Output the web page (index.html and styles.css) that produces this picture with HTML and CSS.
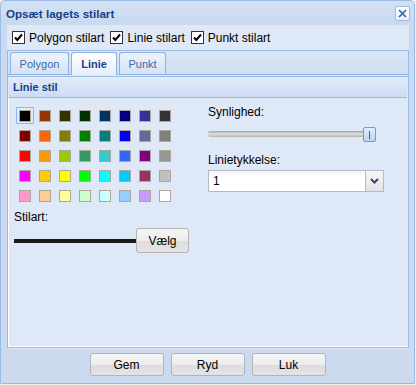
FILE: index.html
```html
<!DOCTYPE html>
<html lang="da">
<head>
    <meta charset="UTF-8">
    <meta name="viewport" content="width=device-width, initial-scale=1.0">
    <title>Opsæt lagets stilart</title>
    <link rel="stylesheet" href="styles.css">
</head>
<body>
<div class="window">
    <div class="win-header">
        <span class="win-title">Opsæt lagets stilart</span>
        <span class="win-close">
            <svg width="13" height="13" viewBox="0 0 13 13"><path d="M3 3 L10 10 M10 3 L3 10" stroke="#3b5f96" stroke-width="1.6" fill="none"/></svg>
        </span>
    </div>

    <div class="win-body">
        <div class="check-row">
            <label class="check"><span class="cb"><svg width="11" height="11" viewBox="0 0 11 11"><path d="M2 5.5 L4.3 8 L9 2.5" stroke="#000" stroke-width="2" fill="none"/></svg></span>Polygon stilart</label>
            <label class="check"><span class="cb"><svg width="11" height="11" viewBox="0 0 11 11"><path d="M2 5.5 L4.3 8 L9 2.5" stroke="#000" stroke-width="2" fill="none"/></svg></span>Linie stilart</label>
            <label class="check"><span class="cb"><svg width="11" height="11" viewBox="0 0 11 11"><path d="M2 5.5 L4.3 8 L9 2.5" stroke="#000" stroke-width="2" fill="none"/></svg></span>Punkt stilart</label>
        </div>

        <div class="tabs">
            <div class="tab-strip">
                <span class="tab tab-polygon">Polygon</span>
                <span class="tab tab-linie active">Linie</span>
                <span class="tab tab-punkt">Punkt</span>
            </div>
            <div class="tab-spacer"></div>
            <div class="tab-body">
                <div class="panel-header">Linie stil</div>
                <div class="panel-body">
                    <div class="col-left">
                        <div class="palette" id="palette"></div>
                        <div class="field-label">Stilart:</div>
                        <div class="style-row">
                            <span class="line-preview"></span>
                            <button class="btn btn-small">Vælg</button>
                        </div>
                    </div>
                    <div class="col-right">
                        <div class="field-label">Synlighed:</div>
                        <div class="slider">
                            <div class="slider-track"></div>
                            <div class="slider-thumb"><span></span></div>
                        </div>
                        <div class="field-label label-gap">Linietykkelse:</div>
                        <div class="combo">
                            <span class="combo-value">1</span>
                            <span class="combo-trigger">
                                <svg width="9" height="6" viewBox="0 0 9 6"><path d="M1 1 L4.5 4.5 L8 1" stroke="#2c4a7c" stroke-width="2" fill="none"/></svg>
                            </span>
                        </div>
                    </div>
                </div>
            </div>
        </div>
    </div>

    <div class="win-footer">
        <button class="btn">Gem</button>
        <button class="btn">Ryd</button>
        <button class="btn">Luk</button>
    </div>
</div>

<script>
    const colors = [
        '000000', '993300', '333300', '003300', '003366', '000080', '333399', '333333',
        '800000', 'FF6600', '808000', '008000', '008080', '0000FF', '666699', '808080',
        'FF0000', 'FF9900', '99CC00', '339966', '33CCCC', '3366FF', '800080', '969696',
        'FF00FF', 'FFCC00', 'FFFF00', '00FF00', '00FFFF', '00CCFF', '993366', 'C0C0C0',
        'FF99CC', 'FFCC99', 'FFFF99', 'CCFFCC', 'CCFFFF', '99CCFF', 'CC99FF', 'FFFFFF'
    ];

    const palette = document.getElementById('palette');

    colors.forEach(function(c, i) {
        const cell = document.createElement('a');
        cell.className = 'swatch' + (i === 0 ? ' selected' : '');
        const em = document.createElement('span');
        em.style.background = '#' + c;
        cell.appendChild(em);
        palette.appendChild(cell);
    });
</script>
</body>
</html>
```

FILE: styles.css
```css
body {
    margin: 0;
    padding: 0;
    background: #eef0f3;
    font-family: "Liberation Sans", Arial, sans-serif;
    font-size: 12px;
    color: #000;
}

.window {
    width: 415px;
    height: 384px;
    box-sizing: border-box;
    border: 1px solid #99bbe8;
    border-radius: 5px 5px 0 0;
    background: #cbdaee;
    display: flex;
    flex-direction: column;
}

.win-header {
    height: 24px;
    display: flex;
    align-items: center;
    justify-content: space-between;
    padding: 0 4px 0 5px;
    background: linear-gradient(#d3e1f3, #c9d9ee);
    border-radius: 5px 5px 0 0;
}

.win-title {
    font-size: 11.6px;
    font-weight: bold;
    color: #15428b;
    padding-top: 1px;
}

.win-close {
    width: 13px;
    height: 13px;
    border: 1px solid #99bbe8;
    border-radius: 2px;
    background: linear-gradient(#ffffff, #e9f0fa);
    display: flex;
    margin-top: 1px;
}

.win-body {
    flex: 1;
    margin: 0 5px 0 6px;
    background: #dfe8f6;
    display: flex;
    flex-direction: column;
}

.check-row {
    height: 25px;
    display: flex;
    align-items: center;
    padding-left: 5px;
}

.check {
    display: flex;
    align-items: center;
    margin-right: 6px;
}

.cb {
    width: 11px;
    height: 11px;
    border: 1px solid #333;
    background: #fff;
    margin-right: 4px;
    display: flex;
}

.tabs {
    flex: 1;
    border: 1px solid #99bbe8;
    display: flex;
    flex-direction: column;
    margin-bottom: 1px;
}

.tab-strip {
    height: 23px;
    display: flex;
    align-items: flex-end;
    padding-left: 2px;
    gap: 2px;
    background: linear-gradient(#dbe6f6, #cfdef2);
    border-bottom: 1px solid #8db2e3;
}

.tab {
    box-sizing: border-box;
    height: 22px;
    border: 1px solid #8db2e3;
    border-bottom: none;
    border-radius: 3px 3px 0 0;
    background: linear-gradient(#eef3fb, #d4e2f4);
    color: #416aa3;
    font-size: 11px;
    display: flex;
    align-items: center;
    justify-content: center;
}

.tab-polygon { width: 59px; }
.tab-linie { width: 46px; }
.tab-punkt { width: 47px; }

.tab.active {
    height: 23px;
    margin-bottom: -1px;
    background: linear-gradient(#ffffff, #e6eefa);
    color: #15428b;
    font-weight: bold;
    border-color: #8db2e3;
}

.tab-spacer {
    height: 1px;
    background: #dfe8f6;
    border-bottom: 1px solid #99bbe8;
}

.tab-body {
    flex: 1;
    display: flex;
    flex-direction: column;
    border-bottom: 1px solid #ffffff;
}

.panel-header {
    height: 20px;
    line-height: 20px;
    margin: 0 1px;
    padding-left: 4px;
    background: linear-gradient(#e3ecf9, #cbdcf2);
    border-bottom: 1px solid #99bbe8;
    color: #15428b;
    font-size: 11px;
    font-weight: bold;
}

.panel-body {
    flex: 1;
    display: flex;
    padding: 7px 0 0 5px;
    border-left: 1px solid #fff;
}

.col-left {
    width: 194px;
}

.col-right {
    width: 176px;
}

.field-label {
    height: 15px;
    line-height: 15px;
}

.label-gap {
    margin-top: 11px;
}

.palette {
    display: grid;
    grid-template-columns: repeat(8, 20px);
    grid-auto-rows: 20px;
    margin: 2px 0 3px 2px;
}

.swatch {
    width: 18px;
    height: 17px;
    box-sizing: border-box;
    border: 1px solid transparent;
    padding: 2px;
}

.swatch span {
    display: block;
    width: 12px;
    height: 12px;
    box-sizing: border-box;
    border: 1px solid #aca899;
}

.swatch.selected {
    border-color: #8bb8f3;
    background: #deecfd;
}

.style-row {
    display: flex;
    align-items: center;
    margin-top: 3px;
}

.line-preview {
    width: 122px;
    height: 4px;
    background: #1a1a1a;
    margin-top: 1px;
}

.btn {
    box-sizing: border-box;
    width: 74px;
    height: 23px;
    border: 1px solid #b4b4b4;
    border-radius: 3px;
    background: linear-gradient(#f6f6f6 0%, #ececec 50%, #dcdcdc 50%, #e4e4e4 100%);
    font-family: "Liberation Sans", Arial, sans-serif;
    font-size: 12px;
    color: #000;
    padding: 0;
}

.btn-small {
    width: 53px;
    height: 25px;
}

.slider {
    position: relative;
    width: 168px;
    height: 15px;
    margin-top: 7px;
}

.slider-track {
    position: absolute;
    left: 0;
    right: 6px;
    top: 4px;
    height: 6px;
    border-radius: 2px;
    background: linear-gradient(#a4a4a4, #e2e2e2 50%, #b0b0b0);
}

.slider-thumb {
    position: absolute;
    right: 0;
    top: 0;
    width: 13px;
    height: 15px;
    box-sizing: border-box;
    border: 1px solid #6f9bd8;
    border-radius: 2px;
    background: linear-gradient(#e4effd, #b7d1f3);
    display: flex;
    justify-content: center;
    align-items: center;
}

.slider-thumb span {
    width: 1px;
    height: 8px;
    background: #3a66a8;
}

.combo {
    display: flex;
    width: 176px;
    height: 22px;
    box-sizing: border-box;
    border: 1px solid #b5b8c8;
    background: linear-gradient(#f4f4f4, #ffffff 30%);
    margin-top: 2px;
}

.combo-value {
    flex: 1;
    padding-left: 4px;
    line-height: 20px;
}

.combo-trigger {
    width: 17px;
    border-left: 1px solid #b5b8c8;
    background: linear-gradient(#f5f5f5, #e4e4e4);
    display: flex;
    align-items: center;
    justify-content: center;
}

.win-footer {
    height: 34px;
    display: flex;
    justify-content: center;
    align-items: flex-start;
    gap: 7px;
    padding-top: 4px;
    box-sizing: border-box;
}
```
